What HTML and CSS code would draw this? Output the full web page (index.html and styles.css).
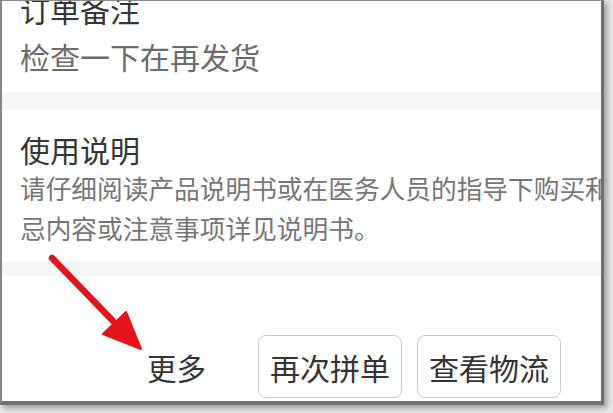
FILE: index.html
```html
<!DOCTYPE html>
<html lang="zh">
<head>
<meta charset="utf-8">
<title>订单详情</title>
<link rel="stylesheet" href="styles.css">
</head>
<body>
<div class="frame">
  <div class="phone">
    <section class="block block-note">
      <div class="title">订单备注</div>
      <div class="note">检查一下在再发货</div>
    </section>
    <div class="band band-1"></div>
    <section class="block block-usage">
      <div class="title title-usage">使用说明</div>
      <p class="desc">请仔细阅读产品说明书或在医务人员的指导下购买和使用，禁忌内容或注意事项详见说明书。</p>
    </section>
    <div class="band band-2"></div>
    <div class="footer">
      <span class="more">更多</span>
      <button class="btn">再次拼单</button>
      <button class="btn">查看物流</button>
    </div>
  </div>
  <svg class="arrow" width="160" height="120" viewBox="0 0 160 120" xmlns="http://www.w3.org/2000/svg">
    <line x1="50" y1="16" x2="112" y2="80" stroke="#e5141b" stroke-width="6.5" stroke-linecap="round"/>
    <polygon points="101,92 124,70 139,107" fill="#e5141b" stroke="#e5141b" stroke-width="2" stroke-linejoin="round"/>
  </svg>
</div>
</body>
</html>
```
FILE: styles.css
```css
html, body {
  margin: 0;
  padding: 0;
}
body {
  width: 613px;
  height: 413px;
  overflow: hidden;
  background: #e9e9e9;
  font-family: "Noto Sans CJK SC", "Noto Sans", sans-serif;
}
.frame {
  position: relative;
  width: 599px;
  height: 400px;
  background: #ffffff;
  border-left: 2px solid #858585;
  border-top: 1px solid #8a8a8a;
  border-right: 3px solid #707070;
  border-bottom: 4px solid #707070;
  box-shadow: 3px 3px 6px rgba(0, 0, 0, 0.35);
  overflow: hidden;
}
.phone {
  width: 740px;
  display: flex;
  flex-direction: column;
}
.block {
  padding-left: 18px;
  padding-right: 20px;
}
.block-note {
  margin-top: -12px;
  padding-bottom: 16px;
}
.title {
  font-size: 30px;
  line-height: 40px;
  color: #353535;
}
.note {
  margin-top: 7px;
  font-size: 30px;
  line-height: 40px;
  color: #6c6c6c;
}
.band {
  background: #f5f5f5;
}
.band-1 {
  height: 18px;
}
.block-usage {
  padding-top: 20px;
  padding-bottom: 14px;
}
.title-usage {
  line-height: 38px;
}
.desc {
  margin: 0;
  width: 700px;
  font-size: 25.7px;
  line-height: 40px;
  color: #767676;
}
.band-2 {
  height: 14px;
}
.footer {
  display: flex;
  align-items: center;
  padding-left: 145px;
  padding-top: 59px;
  gap: 15px;
}
.more {
  width: 58px;
  white-space: nowrap;
  font-size: 29.5px;
  color: #333333;
  margin-right: 38px;
}
.btn {
  width: 144px;
  height: 63px;
  border: 1px solid #cacaca;
  border-radius: 8px;
  background: #ffffff;
  font-family: "Noto Sans CJK SC", "Noto Sans", sans-serif;
  font-size: 30px;
  color: #333333;
  padding: 0;
}
.arrow {
  position: absolute;
  left: 0;
  top: 241px;
}
```
